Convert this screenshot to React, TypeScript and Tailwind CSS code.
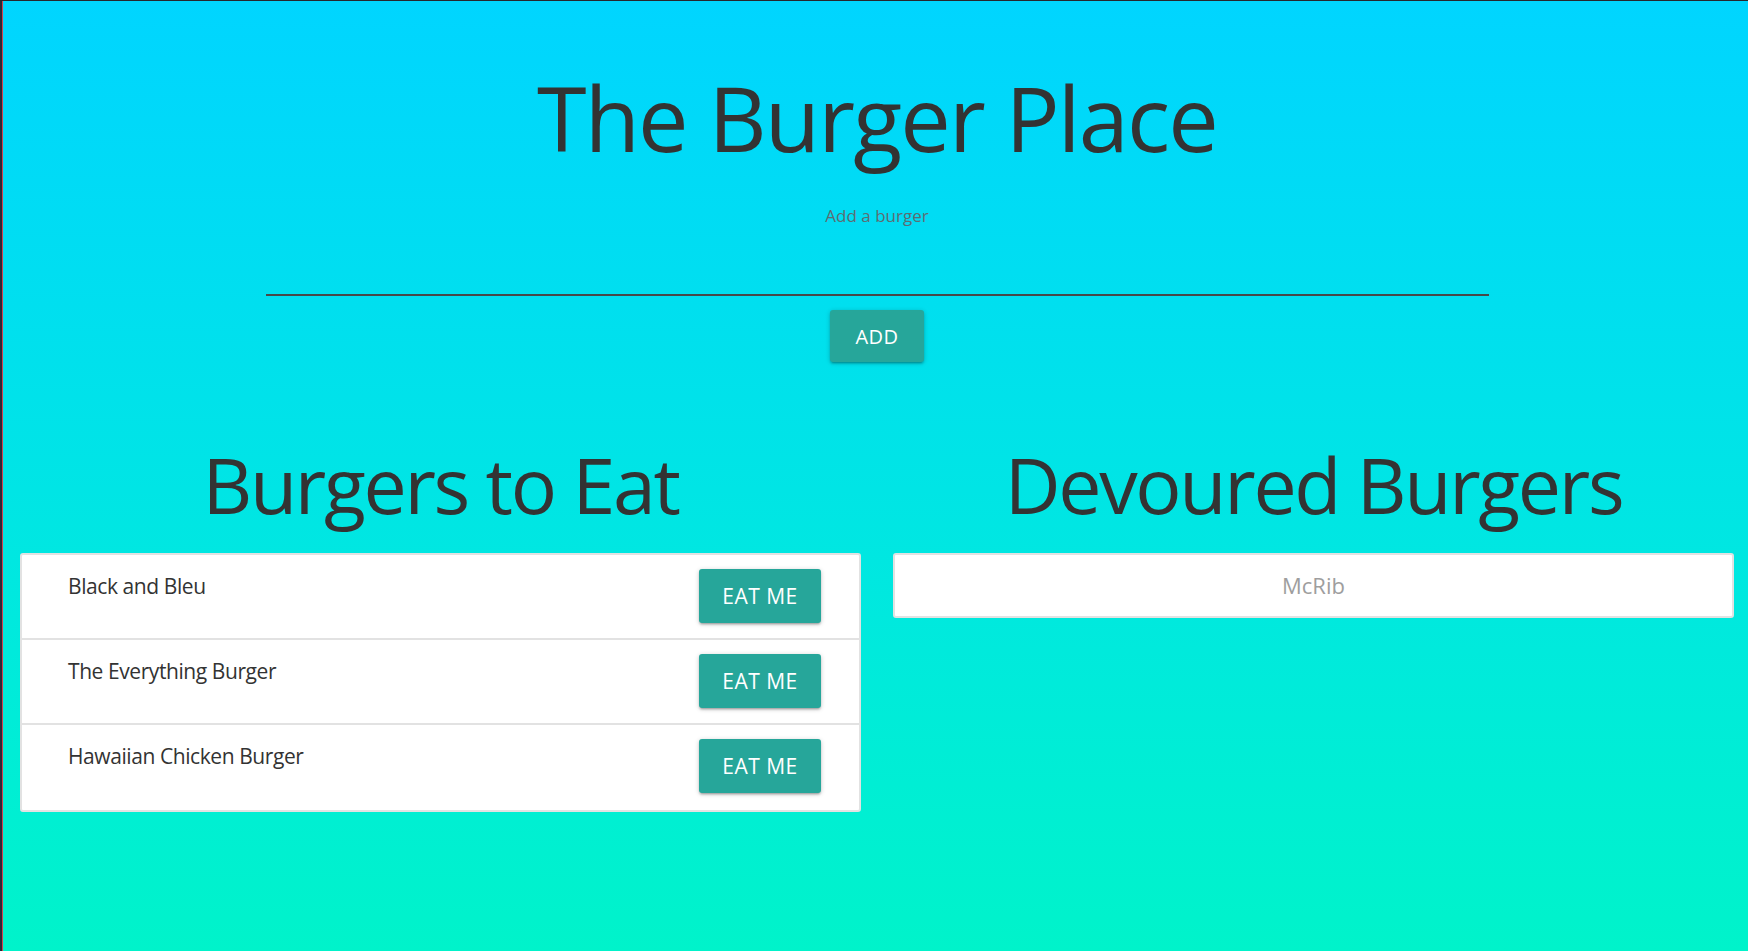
import React from "react";

const toEat = ["Black and Bleu", "The Everything Burger", "Hawaiian Chicken Burger"];
const devoured = ["McRib"];

const btnShadow =
  "shadow-[0_2px_2px_0_rgba(0,0,0,0.14),0_3px_1px_-2px_rgba(0,0,0,0.12),0_1px_5px_0_rgba(0,0,0,0.2)]";

const App = () => {
  return (
    <div className="flex min-h-screen border-t border-[#26262e] font-['Open_Sans','Noto_Sans',sans-serif]">
      <div className="w-[2px] bg-[#2a2a36]" />
      <div className="w-px bg-[#d2404f]" />
      <div className="flex-1 overflow-hidden bg-linear-to-b from-[#00d5ff] to-[#00f3ca]">
        <div className="w-[1748px] text-[#333]">
          <h1 className="mt-[67px] text-center text-[90px] leading-[1.1] tracking-[-0.02em]">
            The Burger Place
          </h1>
          <div className="mt-[37px] text-center text-[17px] leading-[24px] text-[#5d6d72]">
            Add a burger
          </div>
          <div className="mx-auto mt-[66px] w-[1223px] border-b-2 border-[#484848]" />
          <div className="mt-[14px] flex justify-center">
            <button
              className={`h-[52px] w-[94px] rounded-[3px] bg-[#26a69a] pt-[2px] text-[20px] tracking-[0.5px] text-white ${btnShadow}`}
            >
              ADD
            </button>
          </div>

          <div className="mt-[81px] grid grid-cols-2 gap-[32px] px-[17px]">
            <div>
              <h2 className="text-center text-[77px] leading-[1.1] tracking-[-0.03em]">
                Burgers to Eat
              </h2>
              <ul className="mt-[25px] rounded-[3px] border-2 border-[#e2e2e2] bg-white">
                {toEat.map((name, i) => (
                  <li
                    key={name}
                    className={`flex h-[85px] items-start justify-between pl-[46px] pr-[38px] pt-[14px] ${
                      i < toEat.length - 1 ? "border-b-2 border-[#e2e2e2]" : ""
                    }`}
                  >
                    <span className="mt-[2px] text-[21px] leading-[30px] tracking-[-0.02em]">
                      {name}
                    </span>
                    <button
                      className={`h-[54px] w-[122px] rounded-[3px] bg-[#26a69a] pt-[3px] text-[21px] tracking-[0.5px] text-white ${btnShadow}`}
                    >
                      EAT ME
                    </button>
                  </li>
                ))}
              </ul>
            </div>
            <div>
              <h2 className="text-center text-[77px] leading-[1.1] tracking-[-0.03em]">
                Devoured Burgers
              </h2>
              <ul className="mt-[25px] rounded-[3px] border-2 border-[#e2e2e2] bg-white">
                {devoured.map((name) => (
                  <li
                    key={name}
                    className="flex h-[61px] items-center justify-center text-[22px] text-[#9e9e9e]"
                  >
                    {name}
                  </li>
                ))}
              </ul>
            </div>
          </div>
        </div>
      </div>
    </div>
  );
};

export default App;
